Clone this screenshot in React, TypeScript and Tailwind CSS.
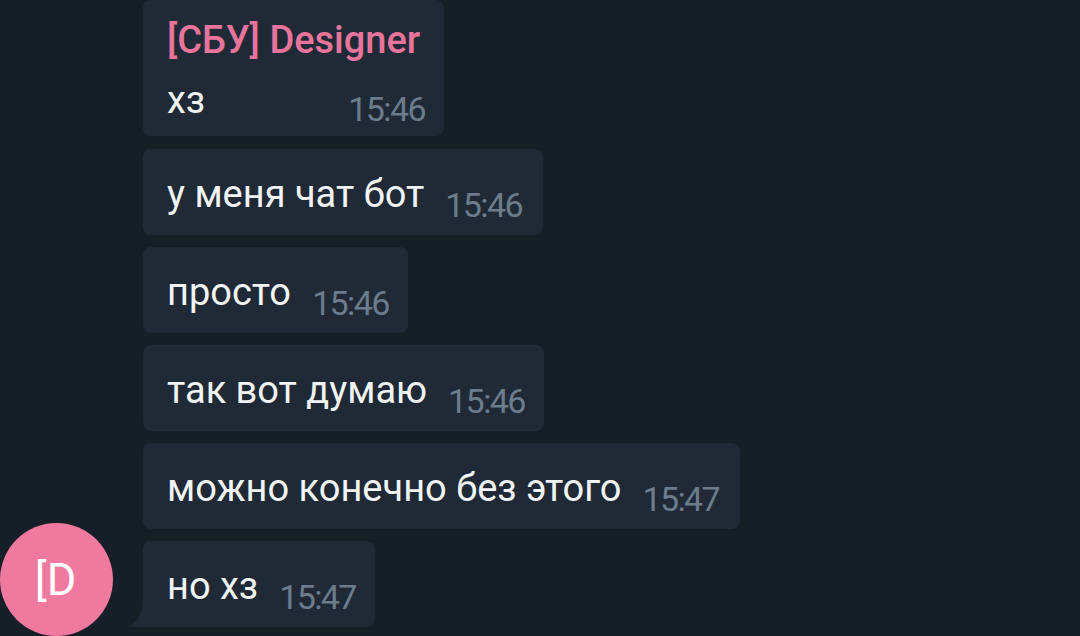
import React from "react";

const font = { fontFamily: "Roboto, 'Noto Sans', sans-serif" };

function Bubble({ text, time, w, last }: { text: string; time: string; w: number; last?: boolean }) {
  return (
    <div className="relative h-[86px] rounded-[8px] bg-[#1f2a36] flex items-center pl-[24px]" style={{ width: w }}>
      <span className="text-[38px] text-[#f2f4f6] leading-none translate-y-[2px]">{text}</span>
      <span className="ml-[21px] text-[34px] text-[#6c7c8b] leading-none translate-y-[13px] tracking-[-1.6px]">{time}</span>
      {last && (
        <svg className="absolute left-[-16px] bottom-0" width="24" height="24" viewBox="0 0 24 24">
          <path d="M24 0 L24 24 L0 24 C8 22 14 14 16 0 Z" fill="#1f2a36" />
        </svg>
      )}
    </div>
  );
}

export default function App() {
  return (
    <div className="w-[1080px] h-[636px] bg-[#161e27] overflow-hidden flex" style={font}>
      <div className="w-[143px] shrink-0 flex items-end">
        <div className="w-[113px] h-[113px] rounded-full bg-[#f07a9f] flex items-center justify-center">
          <span className="text-[45px] text-white leading-none -ml-[2px]">[D</span>
        </div>
      </div>
      <div className="flex flex-col">
        <div className="h-[136px] w-[301px] rounded-[8px] bg-[#1f2a36] pl-[24px] pr-[19px] pt-[21px] flex flex-col">
          <span className="text-[38px] text-[#e8749c] font-medium leading-none tracking-[0px] whitespace-nowrap">[СБУ] Designer</span>
          <div className="flex items-end justify-between mt-[22px]">
            <span className="text-[38px] text-[#f2f4f6] leading-none">хз</span>
            <span className="text-[34px] text-[#6c7c8b] leading-none translate-y-[7px] tracking-[-1.6px]">15:46</span>
          </div>
        </div>
        <div className="mt-[13px]"><Bubble text="у меня чат бот" time="15:46" w={400} /></div>
        <div className="mt-[12px]"><Bubble text="просто" time="15:46" w={265} /></div>
        <div className="mt-[12px]"><Bubble text="так вот думаю" time="15:46" w={401} /></div>
        <div className="mt-[12px]"><Bubble text="можно конечно без этого" time="15:47" w={597} /></div>
        <div className="mt-[12px]"><Bubble text="но хз" time="15:47" w={232} last /></div>
      </div>
    </div>
  );
}
